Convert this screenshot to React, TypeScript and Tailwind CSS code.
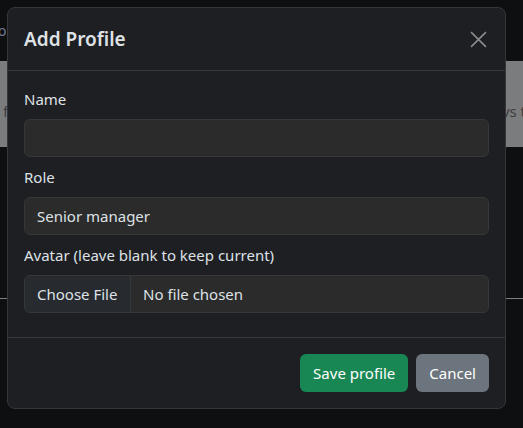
import React from "react";

export default function App() {
  return (
    <div
      className="relative w-[523px] h-[428px] overflow-hidden bg-[#0d0f11]"
      style={{ fontFamily: '"Noto Sans", "Open Sans", sans-serif' }}
    >
      {/* page behind the backdrop */}
      <div className="flex flex-col">
        <div className="h-[61px] flex items-center">
          <span className="-ml-[2px] text-[14px] text-[#6f7d94]">os</span>
        </div>
        <div className="h-[86px] bg-[#7b7c7d] flex items-center justify-between pt-[14px]">
          <span className="ml-[3px] text-[15px] text-[#3b3d3f]">f</span>
          <span className="-mr-[3px] text-[15px] text-[#3b3d3f] whitespace-nowrap">vs t</span>
        </div>
        <div className="h-[151px]" />
        <div className="h-px bg-[#7e7f80]" />
      </div>

      {/* modal */}
      <div className="absolute top-[7px] left-[7px] w-[499px] rounded-[8px] border border-[#34363a] bg-[#1e1f22] text-[#dee2e6]">
        <div className="flex items-center justify-between h-[63px] px-4 border-b border-[#35373b]">
          <h5 className="text-[19px] font-semibold leading-[30px] text-[#dee2e6]">Add Profile</h5>
          <button className="w-[24px] h-[24px] -mr-[1px] flex items-center justify-center text-[#8a8b8d]">
            <svg width="17" height="17" viewBox="0 0 16 16" fill="none" stroke="currentColor" strokeWidth="1.5">
              <path d="M1 1L15 15M15 1L1 15" />
            </svg>
          </button>
        </div>
        <div className="p-4 text-[15px]">
          <div className="mb-2">
            <label className="block mb-2 leading-6">Name</label>
            <div className="h-[38px] rounded-[6px] border border-[#363739] bg-[#2b2b2b]" />
          </div>
          <div className="mb-2">
            <label className="block mb-2 leading-6">Role</label>
            <div className="h-[38px] rounded-[6px] border border-[#363739] bg-[#2b2b2b] flex items-center px-3">
              Senior manager
            </div>
          </div>
          <div className="mb-2">
            <label className="block mb-2 leading-6">Avatar (leave blank to keep current)</label>
            <div className="h-[38px] rounded-[6px] border border-[#363739] bg-[#2b2b2b] flex items-stretch overflow-hidden">
              <div className="w-[106px] shrink-0 whitespace-nowrap bg-[#272b2f] border-r border-[#363739] flex items-center px-3">
                Choose File
              </div>
              <div className="flex items-center pl-3 whitespace-nowrap">No file chosen</div>
            </div>
          </div>
        </div>
        <div className="flex justify-end gap-2 px-4 py-4 border-t border-[#35373b] text-[15px]">
          <button className="h-[38px] px-[13px] rounded-[6px] bg-[#198754] text-white">Save profile</button>
          <button className="h-[38px] px-[13px] rounded-[6px] bg-[#6c757d] text-white">Cancel</button>
        </div>
      </div>
    </div>
  );
}
